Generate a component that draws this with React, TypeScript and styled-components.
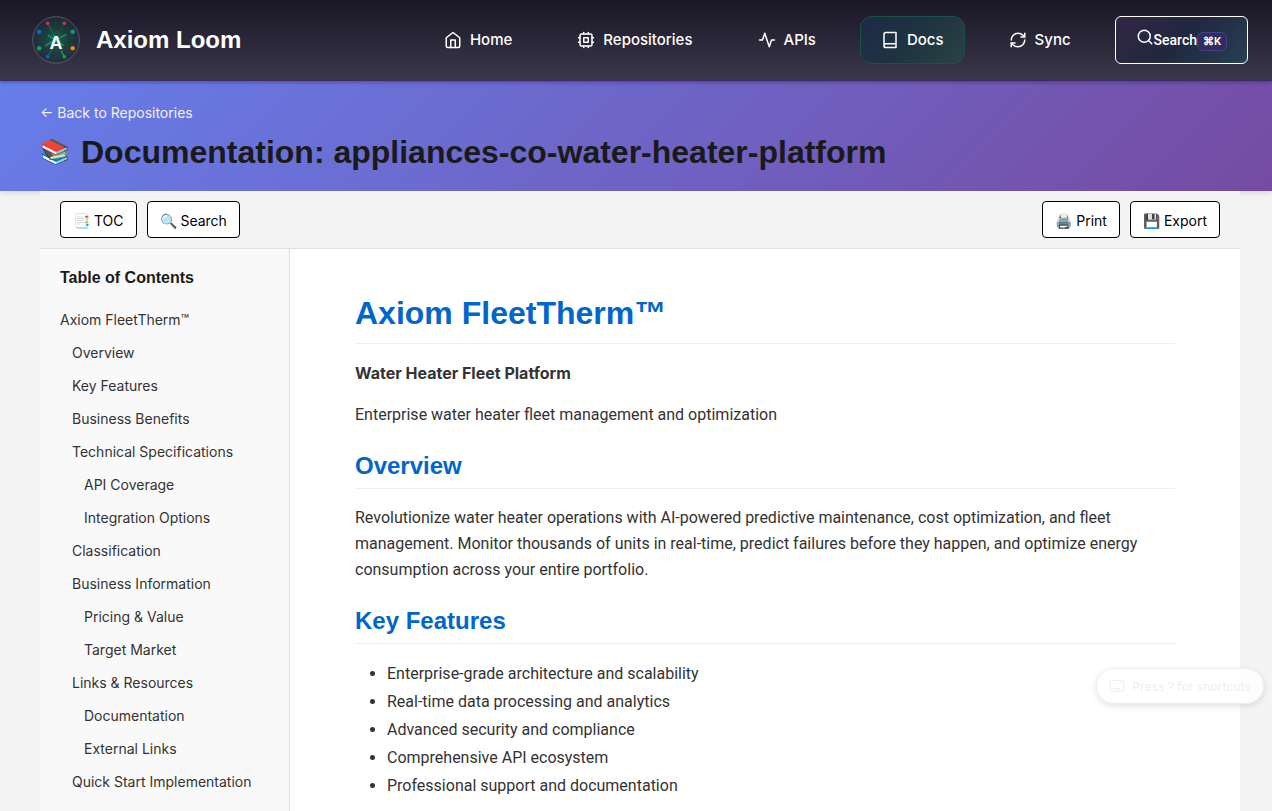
import React from 'react';
import styled, { createGlobalStyle, css } from 'styled-components';

const sans = `Inter, "Liberation Sans", sans-serif`;
const reading = `Roboto, "Liberation Sans", sans-serif`;
const display = `"Liberation Sans", Arial, sans-serif`;

const GlobalStyle = createGlobalStyle`
  * { box-sizing: border-box; }
  body { margin: 0; background: #f4f4f4; font-family: ${sans}; color: #333; }
  a { color: inherit; text-decoration: none; }
  button { font: inherit; cursor: pointer; }
`;

const Page = styled.div`
  display: flex;
  flex-direction: column;
  min-height: 100vh;
`;

const TopBar = styled.header`
  position: relative;
  z-index: 2;
  display: flex;
  align-items: center;
  height: 81px;
  padding: 0 24px 0 32px;
  color: #fff;
  background: linear-gradient(180deg, #1a1827 0%, #393749 100%);
  border-bottom: 1px solid #3d2a68;
  box-shadow: 0 1px 4px rgba(20, 16, 50, 0.4);
`;

const Brand = styled.a`
  display: flex;
  align-items: center;
  gap: 16px;
  font: 700 24px/32px ${display};
`;

const Nav = styled.nav`
  display: flex;
  align-items: center;
  gap: 23px;
  margin-left: auto;
`;

const NavItem = styled.a<{ $active?: boolean }>`
  display: flex;
  align-items: center;
  gap: 8px;
  height: 48px;
  padding: 0 20px;
  border: 1px solid transparent;
  border-radius: 12px;
  font: 500 15px/20px ${sans};
  ${p => p.$active && css`
    border-color: #1b5149;
    background: linear-gradient(135deg, #1b2a48 0%, #1f3440 50%, #2a4245 100%);
  `}
`;

const StrokeIcon = styled.svg`
  flex: none;
  fill: none;
  stroke: currentColor;
  stroke-width: 2;
  stroke-linecap: round;
  stroke-linejoin: round;
`;

const QuickSearch = styled.button`
  display: flex;
  align-items: center;
  height: 48px;
  padding: 0 20px;
  color: #fff;
  border: 1px solid #fff;
  border-radius: 6px;
  background: linear-gradient(135deg, #322645 0%, #20283f 50%, #294054 100%);
  font: 500 14px/20px ${reading};

  ${StrokeIcon} {
    margin-bottom: 6px;
  }
`;

const Keys = styled.kbd`
  margin-top: 2px;
  padding: 0 5px;
  border: 1px solid #483f8c;
  border-radius: 6px;
  background: #2e2d5c;
  font: 600 11px/17px ${reading};
`;

const Hero = styled.section`
  position: relative;
  height: 110px;
  padding: 22px 40px 0;
  background: linear-gradient(135deg, #667eea 0%, #764ba2 100%);
  box-shadow: 0 2px 6px rgba(0, 0, 0, 0.12);
`;

const BackLink = styled.a`
  display: block;
  color: #f0f1fd;
  font-size: 14px;
  line-height: 20px;
`;

const PageTitle = styled.h1`
  display: flex;
  align-items: center;
  gap: 8px;
  margin: 8px 0 0;
  color: #1a1a1a;
  font: 700 32px/42px ${display};
`;

const TitleEmoji = styled.span`
  width: 33px;
  font-size: 24px;
  line-height: 36px;
`;

const Viewer = styled.main`
  position: relative;
  display: flex;
  flex: 1;
  flex-direction: column;
  margin: 0 32px 0 40px;
  background: #fff;
`;

const Toolbar = styled.div`
  display: flex;
  justify-content: space-between;
  padding: 10px 20px;
  background: #f4f4f4;
  border-bottom: 1px solid #e0e0e0;
`;

const ToolGroup = styled.div`
  display: flex;
  gap: 10px;
`;

const ToolButton = styled.button`
  height: 37px;
  padding: 2px 12px 0;
  color: #000;
  background: #fff;
  border: 1px solid #000;
  border-radius: 4px;
  font-size: 14px;
`;

const Columns = styled.div`
  display: grid;
  flex: 1;
  grid-template-columns: 250px 1fr;
`;

const Sidebar = styled.aside`
  padding: 20px 20px 4px;
  background: #f9f9f9;
  border-right: 1px solid #ddd;
`;

const SidebarTitle = styled.h2`
  margin: 0 0 16px;
  color: #1a1a1a;
  font: 700 16px/18px ${display};
`;

const TocList = styled.ul`
  margin: 0;
  padding: 0;
  list-style: none;
`;

const TocItem = styled.li<{ $level: number }>`
  padding-left: ${p => p.$level * 12}px;
  font-size: 14px;
  line-height: 33px;
`;

const Article = styled.article`
  padding: 40px 65px 0;
  font: 400 16px/26px ${reading};
`;

const DocTitle = styled.h1`
  margin: 0 0 16px;
  padding-bottom: 6px;
  color: #06c;
  border-bottom: 1px solid #eee;
  font: 700 32px/48px ${display};
`;

const DocHeading = styled.h2`
  margin: 24px 0 16px;
  padding-bottom: 8px;
  color: #06c;
  border-bottom: 1px solid #eee;
  font: 700 24px/28px ${display};
`;

const Paragraph = styled.p`
  margin: 0 0 16px;
`;

const Lead = styled(Paragraph)`
  font-family: ${sans};
  font-weight: 700;
`;

const Bullets = styled.ul`
  margin: 0;
  padding-left: 32px;
  line-height: 28px;
`;

const ShortcutHint = styled.button`
  position: fixed;
  right: 8px;
  top: 668px;
  display: flex;
  align-items: center;
  gap: 8px;
  height: 36px;
  padding: 0 12px;
  color: #edf0f7;
  background: rgba(255, 255, 255, 0.8);
  border: 1px solid #ebebf7;
  border-radius: 18px;
  box-shadow: 0 2px 6px rgba(0, 0, 0, 0.12);
  font-size: 12px;
  font-weight: 500;
`;

function Icon({ size = 18, children }: { size?: number; children: React.ReactNode }) {
  return <StrokeIcon width={size} height={size} viewBox="0 0 24 24" aria-hidden="true">{children}</StrokeIcon>;
}

function Logo() {
  return (
    <svg width="48" height="48" viewBox="0 0 48 48" aria-hidden="true">
      <defs>
        <radialGradient id="glow">
          <stop offset="0" stopColor="#10715a" stopOpacity="0.85" />
          <stop offset="0.5" stopColor="#17493f" stopOpacity="0.7" />
          <stop offset="1" stopColor="#1e2c3c" stopOpacity="0.7" />
        </radialGradient>
      </defs>
      <circle cx="24" cy="24" r="23.3" fill="url(#glow)" stroke="#555866" strokeWidth="1" />
      <g fill="none" stroke="#0b9a68" strokeLinecap="round">
        <path d="M16 7.5 24 24 16 40.5M24 24l8.3 16.5" strokeWidth="1" opacity="0.6" />
        <path d="M24 24l8.3-16.5" strokeWidth="1" opacity="0.2" />
        <path d="M16.5 19.5 31 29M34 18.5 13.5 29.5M29.5 35.5l2.5 5" strokeWidth="1.5" opacity="0.85" />
      </g>
      <circle cx="15.7" cy="7.3" r="1.7" fill="#dc3545" />
      <circle cx="32.3" cy="7.3" r="1.7" fill="#dc3545" />
      <circle cx="7.2" cy="15.7" r="2.2" fill="#0b67d0" />
      <circle cx="40.7" cy="15.7" r="2.2" fill="#0ba56c" />
      <circle cx="7.2" cy="32.3" r="2.2" fill="#0ba56c" />
      <circle cx="40.7" cy="32.3" r="2.2" fill="#f5821f" />
      <circle cx="15.7" cy="40.7" r="1.7" fill="#0b67d0" />
      <circle cx="32.3" cy="40.7" r="1.7" fill="#0ba56c" />
      <text x="24" y="33" textAnchor="middle" fill="#fff" fontFamily="Liberation Sans, Arial, sans-serif" fontWeight="700" fontSize="18">A</text>
    </svg>
  );
}

const toc: [string, number][] = [
  ['Axiom FleetTherm™', 0], ['Overview', 1], ['Key Features', 1], ['Business Benefits', 1],
  ['Technical Specifications', 1], ['API Coverage', 2], ['Integration Options', 2],
  ['Classification', 1], ['Business Information', 1], ['Pricing & Value', 2],
  ['Target Market', 2], ['Links & Resources', 1], ['Documentation', 2],
  ['External Links', 2], ['Quick Start Implementation', 1],
];

const features = [
  'Enterprise-grade architecture and scalability',
  'Real-time data processing and analytics',
  'Advanced security and compliance',
  'Comprehensive API ecosystem',
  'Professional support and documentation',
];

export default function App() {
  return (
    <Page>
      <GlobalStyle />
      <TopBar>
        <Brand href="#"><Logo />Axiom Loom</Brand>
        <Nav>
          <NavItem href="#">
            <Icon><path d="m3 9 9-7 9 7v11a2 2 0 0 1-2 2H5a2 2 0 0 1-2-2z" /><path d="M9 22V12h6v10" /></Icon>
            Home
          </NavItem>
          <NavItem href="#">
            <Icon>
              <rect x="4" y="4" width="16" height="16" rx="2" />
              <rect x="9" y="9" width="6" height="6" />
              <path d="M15 2v2M15 20v2M2 15h2M2 9h2M20 15h2M20 9h2M9 2v2M9 20v2" />
            </Icon>
            Repositories
          </NavItem>
          <NavItem href="#">
            <Icon><path d="M22 12h-4l-3 9L9 3l-3 9H2" /></Icon>
            APIs
          </NavItem>
          <NavItem href="#" $active>
            <Icon><path d="M4 19.5v-15A2.5 2.5 0 0 1 6.5 2H20v20H6.5a2.5 2.5 0 0 1 0-5H20" /></Icon>
            Docs
          </NavItem>
          <NavItem href="#">
            <Icon>
              <path d="M3 12a9 9 0 0 1 9-9 9.75 9.75 0 0 1 6.74 2.74L21 8" />
              <path d="M21 3v5h-5" />
              <path d="M21 12a9 9 0 0 1-9 9 9.75 9.75 0 0 1-6.74-2.74L3 16" />
              <path d="M8 16H3v5" />
            </Icon>
            Sync
          </NavItem>
          <QuickSearch>
            <Icon><circle cx="11" cy="11" r="8" /><path d="m21 21-4.3-4.3" /></Icon>
            Search<Keys>⌘K</Keys>
          </QuickSearch>
        </Nav>
      </TopBar>
      <Hero>
        <BackLink href="#">← Back to Repositories</BackLink>
        <PageTitle><TitleEmoji>📚</TitleEmoji>Documentation: appliances-co-water-heater-platform</PageTitle>
      </Hero>
      <Viewer>
        <Toolbar>
          <ToolGroup>
            <ToolButton>📑 TOC</ToolButton>
            <ToolButton>🔍 Search</ToolButton>
          </ToolGroup>
          <ToolGroup>
            <ToolButton>🖨️ Print</ToolButton>
            <ToolButton>💾 Export</ToolButton>
          </ToolGroup>
        </Toolbar>
        <Columns>
          <Sidebar>
            <SidebarTitle>Table of Contents</SidebarTitle>
            <TocList>
              {toc.map(([label, level]) => (
                <TocItem key={label} $level={level}><a href="#">{label}</a></TocItem>
              ))}
            </TocList>
          </Sidebar>
          <Article>
            <DocTitle>Axiom FleetTherm™</DocTitle>
            <Lead>Water Heater Fleet Platform</Lead>
            <Paragraph>Enterprise water heater fleet management and optimization</Paragraph>
            <DocHeading>Overview</DocHeading>
            <Paragraph>
              Revolutionize water heater operations with AI-powered predictive maintenance, cost optimization, and fleet
              management. Monitor thousands of units in real-time, predict failures before they happen, and optimize energy
              consumption across your entire portfolio.
            </Paragraph>
            <DocHeading>Key Features</DocHeading>
            <Bullets>{features.map(f => <li key={f}>{f}</li>)}</Bullets>
          </Article>
        </Columns>
      </Viewer>
      <ShortcutHint>
        <Icon size={16}>
          <rect x="2" y="4" width="20" height="16" rx="2" />
          <path d="M6 8h.01M10 8h.01M14 8h.01M18 8h.01M8 12h.01M12 12h.01M16 12h.01M7 16h10" />
        </Icon>
        Press ? for shortcuts
      </ShortcutHint>
    </Page>
  );
}
